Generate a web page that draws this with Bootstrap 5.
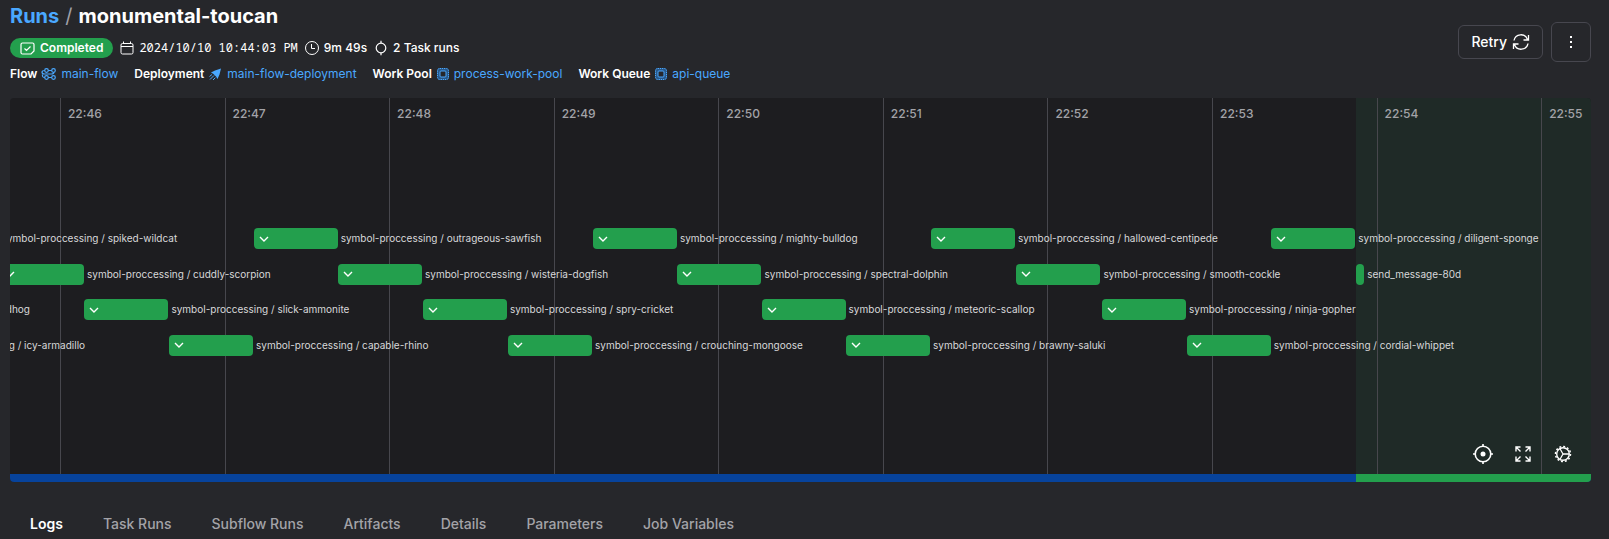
<!DOCTYPE html>
<html lang="en" data-bs-theme="dark">
<head>
<meta charset="utf-8">
<meta name="viewport" content="width=device-width, initial-scale=1">
<title>Runs / monumental-toucan</title>
<link rel="stylesheet" href="https://cdn.jsdelivr.net/npm/bootstrap@5.3.0/dist/css/bootstrap.min.css">
<style>
  body { background: #26272b; color: #fff; font-family: Inter, "Liberation Sans", sans-serif; font-size: 12px; line-height: 20px; overflow-x: hidden; }
  a { color: #4aa8ff; text-decoration: none; }
  svg { fill: none; stroke: currentColor; flex: none; display: block; }
  .tint { color: #4aa8ff; }
  .page { padding: 4px 18px 0 10px; }
  .crumbs { font-size: 20px; line-height: 24px; font-weight: 700; gap: 6px; margin-bottom: 10px; }
  .crumbs .slash { color: #a0a0a8; font-weight: 400; }
  .meta { gap: 6px; margin-bottom: 6px; font-weight: 500; }
  .stamp { font-family: "Noto Sans Mono", "DejaVu Sans Mono", monospace; font-size: 12px; font-weight: 400; }
  .state { background: #239f4d; border-radius: 10px; padding: 0 10px; gap: 5px; font-weight: 600; }
  .links { gap: 16px; }
  .actions { padding-top: 18px; }
  .tool { border: 1px solid #47474f; border-radius: 6px; color: #fff; font-size: 14px; font-weight: 500; line-height: 20px; background: none; }
  .retry { padding: 6px 12px; gap: 5px; }
  .more { padding: 9px; }
  .timeline { background: #1d1d20; border-radius: 4px; height: 384px; margin-top: 14px; }
  .tick { top: 0; bottom: 8px; border-left: 1px solid #47474d; padding: 6px 0 0 7px; color: #a3a3a8; font-size: 12px; line-height: 20px; font-weight: 500; }
  .final { top: 0; bottom: 8px; right: 0; background: #1f2a27; }
  .lanes { height: 128px; margin-top: 130px; }
  .lane { height: 21px; }
  .run { top: 0; gap: 3px; font-size: 10px; line-height: 21px; color: #d8d8da; white-space: nowrap; }
  .bar { width: 84px; height: 21px; border-radius: 4px; background: #239f4d; color: #fff; padding-left: 4px; }
  .bar.short { width: 8px; padding: 0; }
  .tools { right: 16px; bottom: 16px; gap: 16px; }
  .tools button { background: none; border: 0; padding: 0; color: #fff; }
  .strip { bottom: 0; height: 8px; background: #07439c; }
  .strip span { background: #239f4d; }
  .tabs { padding: 32px 0 0 20px; gap: 40px; font-size: 14px; font-weight: 500; }
  .tabs a { color: #a3a3a8; }
  .tabs a.active { color: #fff; font-weight: 600; }
</style>
</head>
<body>
<svg class="d-none">
  <symbol id="chev" viewBox="0 0 12 12"><path d="M2 4l4 4 4-4" stroke-width="1.4"/></symbol>
  <symbol id="pool" viewBox="0 0 14 14"><rect x="1.500" y="1.500" width="11" height="11" rx="2" fill="#28588a" stroke="#4aa8ff" stroke-dasharray="1.500 .7"/><rect x="4" y="4" width="6" height="6" rx="1" fill="#26272b" stroke="#4aa8ff"/></symbol>
</svg>
<main class="page">
  <header class="d-flex justify-content-between align-items-start">
    <div>
      <h1 class="crumbs d-flex"><a href="#">Runs</a><span class="slash">/</span><span>monumental-toucan</span></h1>
      <div class="meta d-flex align-items-center">
        <span class="state d-flex align-items-center">
          <svg width="15" height="15" viewBox="0 0 15 15" stroke-width="1.2"><path d="M2.500 2h10q1.500 0 1.500 1.500V10l-3 3H2.500Q1 13 1 11.500v-8Q1 2 2.500 2zM4.500 7.500l2 2 4-4"/></svg>
          Completed</span>
        <span class="d-flex align-items-center gap-1">
          <svg width="16" height="16" viewBox="0 0 16 16"><path d="M3.500 3.500h9q1.500 0 1.500 1.500v7.500q0 1.500-1.500 1.500h-9q-1.500 0-1.500-1.500V5q0-1.500 1.500-1.500zM2 6.500h12M4.500 1.500v2M11.500 1.500v2"/></svg>
          <span class="stamp">2024/10/10 10:44:03 PM</span></span>
        <span class="d-flex align-items-center gap-1">
          <svg width="16" height="16" viewBox="0 0 16 16"><circle cx="8" cy="8" r="6.500"/><path d="M7.500 4v4.500H11"/></svg>
          9m 49s</span>
        <span class="d-flex align-items-center gap-1">
          <svg width="16" height="16" viewBox="0 0 16 16" stroke-width="1.200"><circle cx="8" cy="8" r="4.800"/><path d="M8 .8v2.500M8 12.700v2.500"/></svg>
          2 Task runs</span>
      </div>
      <div class="links d-flex align-items-center">
        <span class="d-flex align-items-center gap-1"><b class="fw-semibold">Flow</b>
          <svg class="tint" width="16" height="14" viewBox="0 0 16 14" stroke-width="1.200"><circle cx="5.500" cy="3.500" r="1.800"/><circle cx="12.500" cy="3.500" r="1.800"/><circle cx="5.500" cy="10.500" r="1.800"/><circle cx="12.500" cy="10.500" r="1.800"/><path d="M7.300 3.500h3.400M7.300 10.500h3.400M3.700 3.500Q1 3.500 1 5.300 1 7 3.500 7h7Q13 7 12.800 5.300M1.500 7.500q-.5 3 2.200 3"/></svg>
          <a href="#">main-flow</a></span>
        <span class="d-flex align-items-center gap-1"><b class="fw-semibold">Deployment</b>
          <svg class="tint" width="15" height="14" viewBox="0 0 15 14"><path d="M13 1.500L7 3.500l-4 2L5.500 7 8 9.500 9.500 12l2-4.500z" fill="currentColor" stroke="none"/><path d="M2 12.500l4-4M5 13l2.300-2.300M1.500 9.500L4 7.500"/></svg>
          <a href="#">main-flow-deployment</a></span>
        <span class="d-flex align-items-center gap-1"><b class="fw-semibold">Work Pool</b>
          <svg width="14" height="14"><use href="#pool"/></svg>
          <a href="#">process-work-pool</a></span>
        <span class="d-flex align-items-center gap-1"><b class="fw-semibold">Work Queue</b>
          <svg width="14" height="14"><use href="#pool"/></svg>
          <a href="#">api-queue</a></span>
      </div>
    </div>
    <div class="actions d-flex align-items-center gap-2">
      <button class="tool retry d-flex align-items-center" type="button">Retry
        <svg width="18" height="18" viewBox="0 0 18 18" stroke-width="1.300"><path d="M2 7.500A7 7 0 0 1 15.500 6.500M16.500 2v5h-5M16 10.500A7 7 0 0 1 2.500 11.500M1.500 16v-5h5"/></svg>
      </button>
      <button class="tool more" type="button" aria-label="More actions">
        <svg width="20" height="20" viewBox="0 0 20 20"><path d="M9 4h2v2H9zM9 9h2v2H9zM9 14h2v2H9z" fill="#fff" stroke="none"/></svg>
      </button>
    </div>
  </header>

  <section class="timeline position-relative overflow-hidden" id="timeline" aria-label="Run timeline">
    <div class="final position-absolute" style="left:85.150%"></div>
    <div id="ticks"></div>
    <div class="lanes d-flex flex-column justify-content-between position-relative" id="lanes"></div>
    <div class="tools d-flex position-absolute">
      <button type="button" aria-label="Center timeline"><svg width="24" height="24" viewBox="0 0 24 24" stroke-width="1.600"><circle cx="12" cy="12" r="7.800"/><circle cx="12" cy="12" r="2.500" fill="#fff" stroke="none"/><path d="M12 2v3M12 19v3M2 12h3M19 12h3"/></svg></button>
      <button type="button" aria-label="Full screen"><svg width="24" height="24" viewBox="0 0 24 24" stroke-width="1.400"><path d="M5 9.500V5h4.500M5 5l4.500 4.500M14.500 5H19v4.500M19 5l-4.500 4.500M5 14.500V19h4.500M5 19l4.500-4.500M19 14.500V19h-4.500M19 19l-4.500-4.500"/></svg></button>
      <button type="button" aria-label="Settings"><svg width="24" height="24" viewBox="0 0 24 24"><circle cx="12" cy="12" r="6.300" stroke-width="1.400"/><circle cx="12" cy="12" r="7.500" stroke-width="1.500" stroke-dasharray="1.960 1.960"/><path d="M12 12h6M12 12L9 6.800M12 12l-3 5.200" stroke-width="1.300"/></svg></button>
    </div>
    <div class="strip position-absolute start-0 end-0"><span class="d-block h-100 ms-auto" style="width:14.850%"></span></div>
  </section>

  <nav class="tabs d-flex" aria-label="Run details">
    <a href="#" class="active">Logs</a><a href="#">Task Runs</a><a href="#">Subflow Runs</a><a href="#">Artifacts</a><a href="#">Details</a><a href="#">Parameters</a><a href="#">Job Variables</a>
  </nav>
</main>
<script>
  // One minute spans 10.41% of the visible window; 22:46 is the first full minute in view.
  const minute = 10.41, first = 3.16;
  document.getElementById('ticks').innerHTML = Array.from({length: 10}, (_, i) =>
    `<div class="tick position-absolute" style="left:${(first + i * minute).toFixed(2)}%">22:${46 + i}</div>`).join('');

  // Each lane lists [start in % of the window, run name].
  const lanes = [
    [[-6.03, 'spiked-wildcat'], [15.41, 'outrageous-sawfish'], [36.87, 'mighty-bulldog'], [58.25, 'hallowed-centipede'], [79.78, 'diligent-sponge']],
    [[-0.63, 'cuddly-scorpion'], [20.75, 'wisteria-dogfish'], [42.22, 'spectral-dolphin'], [63.66, 'smooth-cockle'], [85.15, null]],
    [[-16.73, 'curious-groundhog'], [4.71, 'slick-ammonite'], [26.12, 'spry-cricket'], [47.54, 'meteoric-scallop'], [69.07, 'ninja-gopher']],
    [[-11.32, 'icy-armadillo'], [10.06, 'capable-rhino'], [31.5, 'crouching-mongoose'], [52.88, 'brawny-saluki'], [74.43, 'cordial-whippet']]
  ];
  document.getElementById('lanes').innerHTML = lanes.map(runs => '<div class="lane position-relative">' + runs.map(([x, name]) =>
    `<div class="run d-flex position-absolute" style="left:${x}%">` + (name
      ? `<span class="bar d-flex align-items-center"><svg width="12" height="12"><use href="#chev"/></svg></span><span>symbol-proccessing / ${name}</span>`
      : '<span class="bar short"></span><span>send_message-80d</span>') + '</div>').join('') + '</div>').join('');
</script>
<script src="https://cdn.jsdelivr.net/npm/bootstrap@5.3.0/dist/js/bootstrap.bundle.min.js"></script>
</body>
</html>
